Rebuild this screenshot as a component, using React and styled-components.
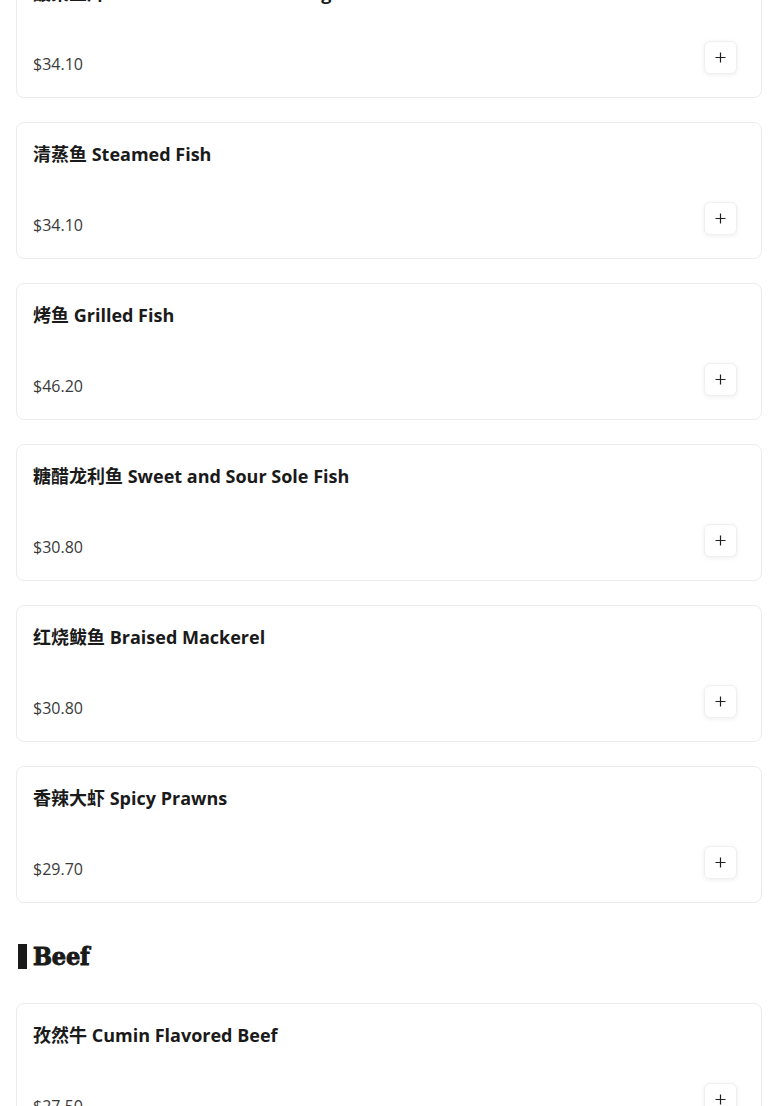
import React from 'react'
import styled, { createGlobalStyle } from 'styled-components'

const GlobalStyle = createGlobalStyle`
  body {
    margin: 0;
    background: #ffffff;
    font-family: "Open Sans", "Noto Sans", "Noto Sans CJK SC", sans-serif;
    color: #1a1a1a;
  }
`

const sections = [
  {
    title: null,
    items: [
      { id: 1, zh: '酸菜鱼片', en: 'Fish with Pickled Cabbage', price: 34.1 },
      { id: 2, zh: '清蒸鱼', en: 'Steamed Fish', price: 34.1 },
      { id: 3, zh: '烤鱼', en: 'Grilled Fish', price: 46.2 },
      { id: 4, zh: '糖醋龙利鱼', en: 'Sweet and Sour Sole Fish', price: 30.8 },
      { id: 5, zh: '红烧鲅鱼', en: 'Braised Mackerel', price: 30.8 },
      { id: 6, zh: '香辣大虾', en: 'Spicy Prawns', price: 29.7 },
    ],
  },
  {
    title: 'Beef',
    items: [
      { id: 7, zh: '孜然牛', en: 'Cumin Flavored Beef', price: 27.5 },
    ],
  },
]

function PlusIcon() {
  return (
    <svg width="11" height="11" viewBox="0 0 11 11" fill="none">
      <path d="M5.5 0.5v10M0.5 5.5h10" stroke="#1f1f1f" strokeWidth="1.2" />
    </svg>
  )
}

function DishCard({ zh, en, price }) {
  return (
    <Card>
      <Title>{zh} {en}</Title>
      <Bottom>
        <Price>${price.toFixed(2)}</Price>
        <AddButton aria-label="add"><PlusIcon /></AddButton>
      </Bottom>
    </Card>
  )
}

function App() {
  return (
    <>
      <GlobalStyle />
      <Menu>
        {sections.map((section, i) => (
          <Section key={i}>
            {section.title && <SectionTitle>{section.title}</SectionTitle>}
            <List>
              {section.items.map((item) => (
                <DishCard key={item.id} {...item} />
              ))}
            </List>
          </Section>
        ))}
      </Menu>
    </>
  )
}

const Menu = styled.div`
  padding: 0 16px;
  margin-top: -39px;
`

const Section = styled.section`
  display: flex;
  flex-direction: column;
`

const SectionTitle = styled.h2`
  display: flex;
  align-items: center;
  height: 25px;
  margin: 41px 0 34px 2px;
  padding-left: 6px;
  border-left: 9px solid #1a1a1a;
  font-family: "DejaVu Serif Condensed", "DejaVu Serif", serif;
  font-weight: 700;
  font-size: 25px;
  line-height: 25px;
  letter-spacing: -0.2px;
  -webkit-text-stroke: 0.9px #1a1a1a;
  color: #1a1a1a;
`

const List = styled.div`
  display: flex;
  flex-direction: column;
  gap: 24px;
`

const Card = styled.div`
  display: flex;
  flex-direction: column;
  justify-content: space-between;
  height: 137px;
  box-sizing: border-box;
  padding: 19px 24px 21px 16px;
  border: 1px solid #ececec;
  border-radius: 8px;
  background: #fff;
`

const Title = styled.div`
  font-size: 18px;
  font-weight: 700;
  line-height: 24px;
  color: #1a1a1a;
`

const Bottom = styled.div`
  display: flex;
  justify-content: space-between;
  align-items: flex-end;
`

const Price = styled.div`
  font-size: 16px;
  line-height: 24px;
  color: #3a3a3a;
`

const AddButton = styled.button`
  display: flex;
  align-items: center;
  justify-content: center;
  width: 33px;
  height: 33px;
  margin-bottom: 2px;
  padding: 0;
  border: 1px solid #f0f0f0;
  border-radius: 6px;
  background: #fff;
  box-shadow: 0 1px 5px rgba(0, 0, 0, 0.07);
  cursor: pointer;
`

export default App
